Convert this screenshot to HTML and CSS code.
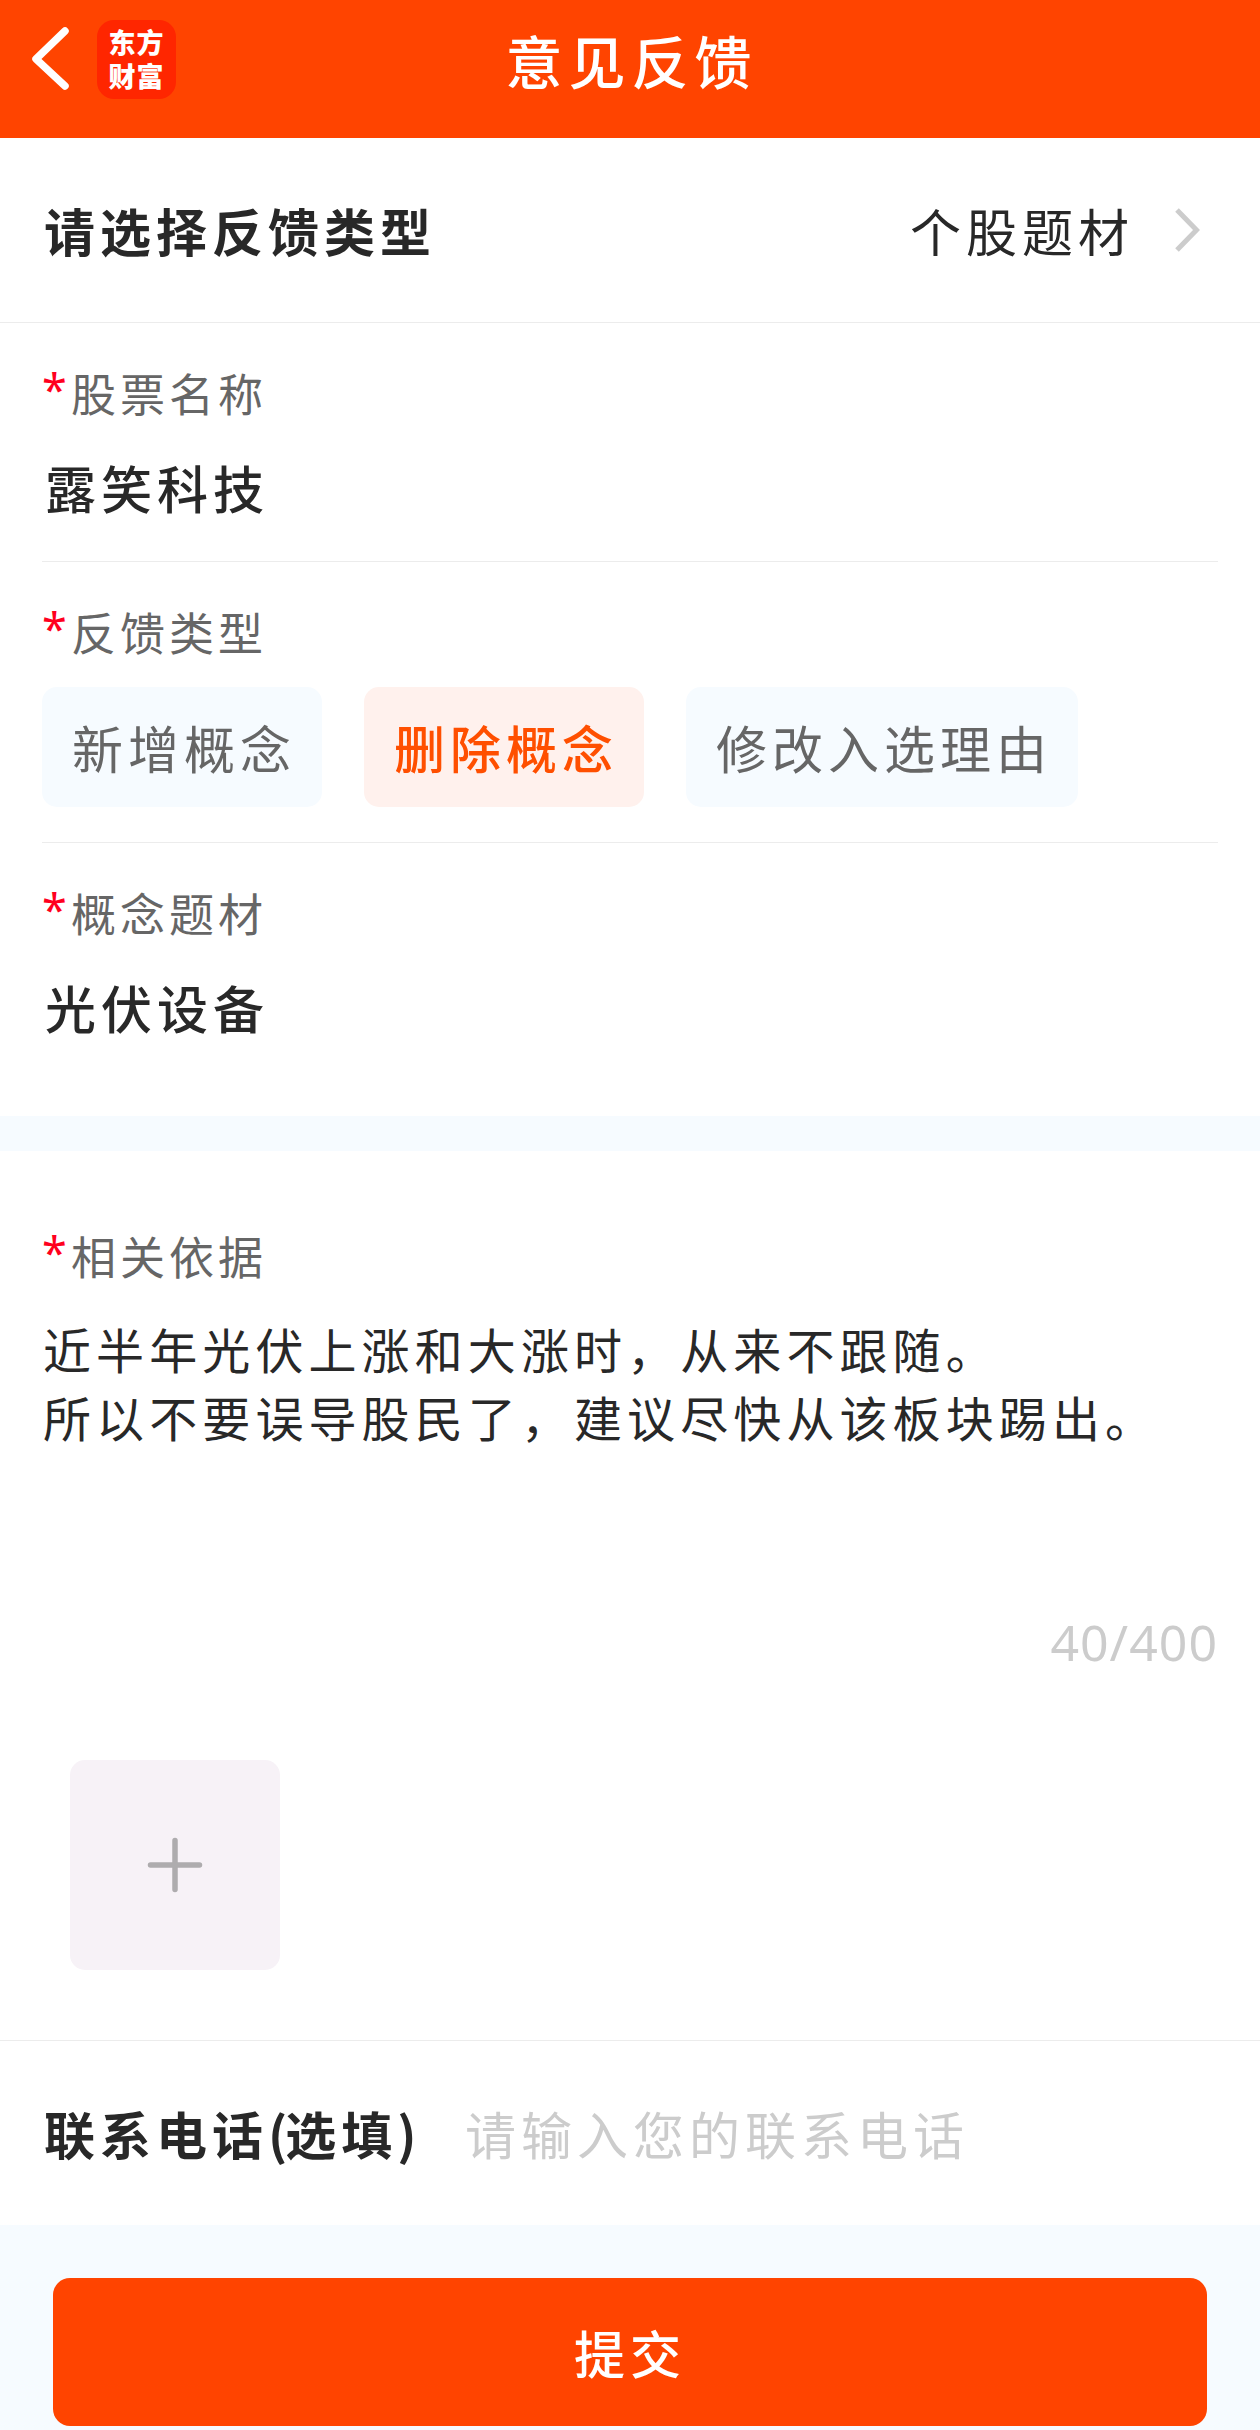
FILE: index.html
```
<!DOCTYPE html>
<html lang="zh-CN">
<head>
  <meta charset="UTF-8" />
  <meta name="viewport" content="width=device-width, initial-scale=1.0"/>
  <title>意见反馈</title>
  <link rel="stylesheet" href="styles.css">
</head>
<body>
  <header class="header">
    <div class="header-left">
      <svg class="back-icon" viewBox="0 0 38 64" fill="none">
        <path d="M34 4 5 32 34 59" stroke="#fff" stroke-width="7.500" stroke-linecap="round" stroke-linejoin="round"/>
      </svg>
      <div class="app-logo">东方<br>财富</div>
    </div>
    <h1 class="header-title">意见反馈</h1>
  </header>

  <main>
    <div class="type-row">
      <span class="row-title">请选择反馈类型</span>
      <div class="type-value">
        <span>个股题材</span>
        <svg class="arrow-icon" viewBox="0 0 26 44" fill="none">
          <path d="M3 2 22.500 22 3 42" stroke="#ccc" stroke-width="5"/>
        </svg>
      </div>
    </div>

    <section class="fields">
      <div class="field">
        <div class="field-label"><span class="required">*</span>股票名称</div>
        <div class="field-value">露笑科技</div>
      </div>

      <div class="field">
        <div class="field-label"><span class="required">*</span>反馈类型</div>
        <div class="chips">
          <button class="chip">新增概念</button>
          <button class="chip active">删除概念</button>
          <button class="chip">修改入选理由</button>
        </div>
      </div>

      <div class="field last">
        <div class="field-label"><span class="required">*</span>概念题材</div>
        <div class="field-value">光伏设备</div>
      </div>
    </section>

    <section class="reason">
      <div class="field-label"><span class="required">*</span>相关依据</div>
      <textarea class="reason-text" maxlength="400">近半年光伏上涨和大涨时，从来不跟随。
所以不要误导股民了，建议尽快从该板块踢出。</textarea>
      <div class="counter">40/400</div>
      <button class="upload" aria-label="添加图片">
        <svg viewBox="0 0 56 56" fill="none">
          <path d="M28 3.500v49M3.500 28h49" stroke="#aeacae" stroke-width="5.500" stroke-linecap="round"/>
        </svg>
      </button>
    </section>

    <div class="phone-row">
      <label class="row-title" for="phone">联系电话<span class="paren">(</span>选填<span class="paren">)</span></label>
      <input class="phone-input" id="phone" type="tel" placeholder="请输入您的联系电话">
    </div>
  </main>

  <footer class="footer">
    <button class="submit-button">提交</button>
  </footer>
</body>
</html>
```

FILE: styles.css
```
* { margin: 0; padding: 0; box-sizing: border-box; }

body {
  font-family: "Noto Sans CJK SC", sans-serif;
  font-size: 51px;
  line-height: 60px;
  letter-spacing: 5px;
  color: #282828;
  background-color: #f6fbff;
}

button, input, textarea {
  font: inherit;
  letter-spacing: inherit;
  color: inherit;
  border: none;
  outline: none;
}

.header {
  display: grid;
  grid-template-columns: 1fr auto 1fr;
  align-items: center;
  height: 138px;
  padding: 0 28px 20px 31px;
  background-color: #ff4400;
  color: #fff;
}

.header-left {
  display: flex;
  align-items: center;
  gap: 28px;
}

.back-icon { width: 38px; height: 64px; }

.app-logo {
  width: 79px;
  height: 79px;
  padding-top: 5px;
  border-radius: 17px;
  background-color: #ff2600;
  text-align: center;
  font-size: 27px;
  font-weight: 900;
  line-height: 34px;
  letter-spacing: 1px;
}

.header-title {
  font-size: 57px;
  font-weight: 500;
  letter-spacing: 6px;
}

.type-row {
  display: flex;
  align-items: center;
  justify-content: space-between;
  height: 185px;
  padding: 0 60px 0 44px;
  border-bottom: 1px solid #ececec;
  background-color: #fff;
}

.row-title { font-weight: 700; }

.type-value {
  display: flex;
  align-items: center;
  gap: 40px;
}

.arrow-icon { width: 26px; height: 44px; }

.fields {
  padding: 0 42px;
  background-color: #fff;
}

.field {
  height: 239px;
  padding-top: 40px;
  border-bottom: 1px solid #ececec;
}

.field:nth-child(2) { height: 281px; }

.field.last {
  height: 273px;
  border-bottom: none;
}

.field-label {
  display: flex;
  height: 60px;
  font-size: 45px;
  letter-spacing: 4px;
  color: #666;
}

.required {
  width: 29px;
  line-height: 54px;
  font-family: "Noto Sans", sans-serif;
  letter-spacing: 0;
  color: #ff001e;
}

.field-value {
  margin-top: 34px;
  padding-left: 3px;
  font-weight: 500;
}

.chips {
  display: flex;
  gap: 42px;
  margin-top: 25px;
}

.chip {
  height: 120px;
  padding: 0 26px 0 30px;
  border-radius: 15px;
  background-color: #f6fbff;
  color: #666;
}

.chip.active {
  background-color: #fff1ed;
  color: #ff4f00;
  font-weight: 500;
}

.reason {
  height: 890px;
  margin-top: 35px;
  padding: 75px 42px 0;
  border-bottom: 1px solid #ececec;
  background-color: #fff;
}

.reason-text {
  display: block;
  width: 100%;
  height: 260px;
  margin-top: 28px;
  padding-left: 1px;
  resize: none;
  background: transparent;
  font-size: 48px;
  line-height: 68px;
  letter-spacing: 5.100px;
}

.counter {
  margin-top: 38px;
  text-align: right;
  font-family: "Noto Sans", sans-serif;
  font-size: 50px;
  letter-spacing: 1px;
  color: #ccc;
}

.upload {
  display: flex;
  align-items: center;
  justify-content: center;
  width: 210px;
  height: 210px;
  margin: 88px 0 0 28px;
  border-radius: 15px;
  background-color: #f7f2f7;
}

.upload svg { width: 56px; height: 56px; }

.phone-row {
  display: flex;
  align-items: center;
  height: 184px;
  padding: 0 42px 0 44px;
  background-color: #fff;
}

.phone-row .row-title { width: 421px; }

.paren { letter-spacing: -2px; }

.phone-input {
  flex: 1;
  min-width: 0;
  height: 80px;
  background: transparent;
}

.phone-input::placeholder { color: #ccc; }

.footer { padding: 53px 53px 4px; }

.submit-button {
  display: block;
  width: 100%;
  height: 148px;
  border-radius: 17px;
  background-color: #ff4400;
  color: #fff;
  font-weight: 500;
}
```
